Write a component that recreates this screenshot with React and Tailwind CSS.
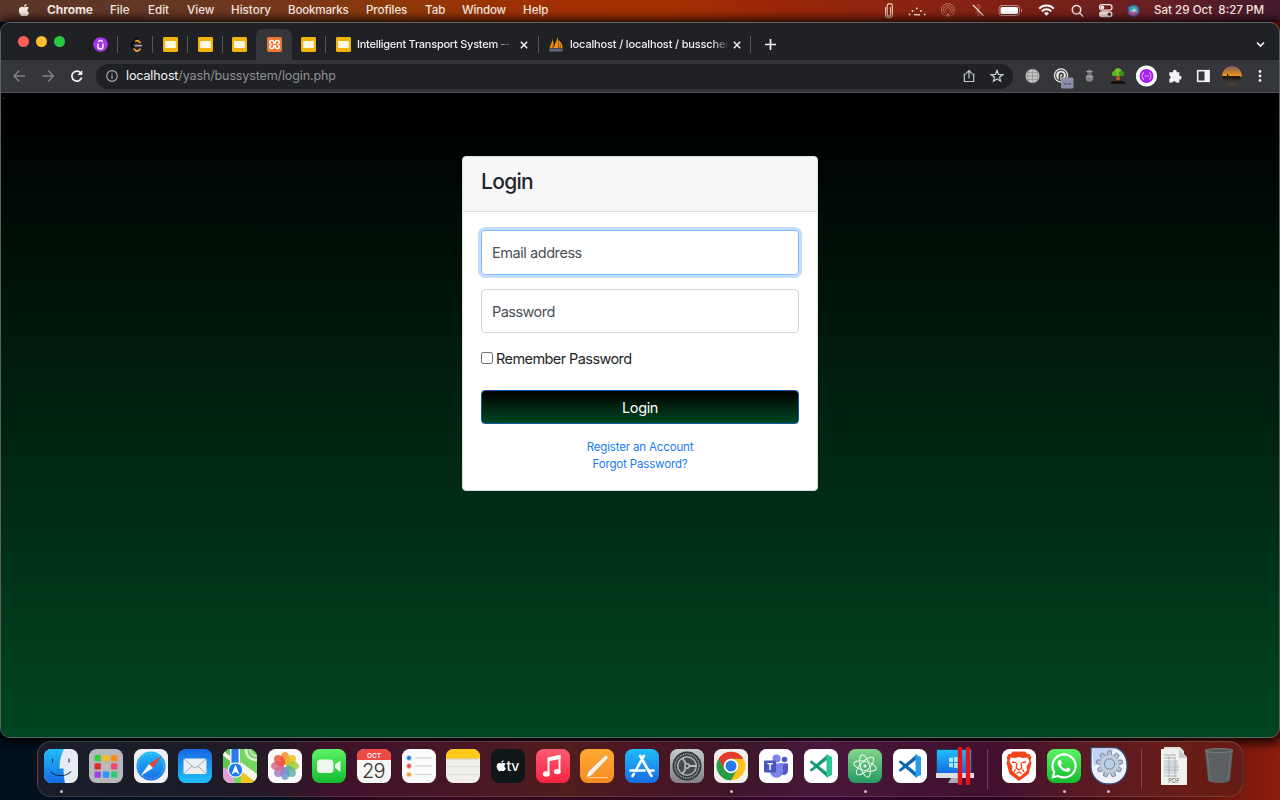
import React from "react";
import { FaApple, FaWhatsapp } from "react-icons/fa";

/* ---------- menu bar ---------- */
function MenuBar() {
  return (
    <header className="flex h-[22px] shrink-0 items-center bg-[linear-gradient(90deg,#5a3729_0%,#633725_12%,#77371a_22%,#8f3809_31%,#a03002_42%,#a33001_52%,#982608_61%,#8e2410_70%,#7d2117_80%,#672026_90%,#431a2c_100%)] pb-[2px] text-[11.6px] font-medium leading-[18px] text-[#f7e9e2]">
      <div className="w-[47px] pl-[17px]"><FaApple size={14} /></div>
      <span className="w-[63px] text-[12px] font-bold tracking-[-.1px]">Chrome</span>
      <span className="w-[38px]">File</span>
      <span className="w-[39px]">Edit</span>
      <span className="w-[44px]">View</span>
      <span className="w-[57px]">History</span>
      <span className="w-[78px] tracking-[-.2px]">Bookmarks</span>
      <span className="w-[59px] tracking-[-.1px]">Profiles</span>
      <span className="w-[37px]">Tab</span>
      <span className="w-[61px] tracking-[-.2px]">Window</span>
      <span className="w-[352px]">Help</span>
      <svg className="w-[28px]" height="20" viewBox="0 0 28 20" fill="none" stroke="#e9c8ba" strokeWidth="1.1">
        <path d="M10.6 7v7.5a3.4 3.2 0 0 0 6.8 0V6.2a2.6 2.6 0 0 0-5.2 0v8.2a1.7 1.7 0 0 0 3.4 0V7" />
      </svg>
      <svg className="w-[31px]" height="20" viewBox="0 0 31 20" fill="#f7e9e2">
        <circle cx="6.5" cy="14.5" r="1" /><circle cx="9.5" cy="11" r=".9" /><circle cx="13.8" cy="8.4" r=".9" /><circle cx="18" cy="11" r=".9" /><circle cx="21.6" cy="14.5" r="1" /><rect x="11" y="14" width="6" height="1.5" />
      </svg>
      <svg className="w-[31px]" height="20" viewBox="0 0 31 20" fill="none" stroke="#bb6d5a" strokeWidth="1">
        <path d="M10.600 15.700a6.500 6.500 0 1 1 6.600 0M11.400 13.600a4.400 4.400 0 1 1 5 0M12.400 11.900a2.400 2.400 0 1 1 3 0" /><path d="m12 16 1.900-3 1.900 3z" fill="#bb6d5a" />
      </svg>
      <svg className="w-[30px]" height="20" viewBox="0 0 30 20" fill="none" strokeWidth="1">
        <path d="m10 7 6 6.5-3 3V4l3 3-6 6.5" stroke="#ad6457" /><path d="m8 5 10.400 10.600" stroke="#edd8d2" strokeWidth="1.300" />
      </svg>
      <svg className="w-[34px]" height="20" viewBox="0 0 34 20">
        <rect x="4" y="5.500" width="20.500" height="10" rx="3" fill="none" stroke="#c58a7e" /><rect x="5.500" y="7" width="17.500" height="7" rx="1.600" fill="#fff" /><path d="M26 8.700v3.600c1.700-.700 1.700-2.900 0-3.600" fill="#c58a7e" />
      </svg>
      <svg className="w-[36px]" height="20" viewBox="0 0 36 20" fill="none" stroke="#fff" strokeWidth="1.900">
        <path d="M10.200 8.700a10 10 0 0 1 14.600 0M12.800 11.300a6.300 6.300 0 0 1 9.400 0" /><path d="M17.500 16 15 13.200a3.600 3.600 0 0 1 5 0z" fill="#fff" stroke="none" />
      </svg>
      <svg className="w-[28px]" height="20" viewBox="0 0 28 20" fill="none" stroke="#f8e8e6" strokeWidth="1.500">
        <circle cx="11.500" cy="9.800" r="4.200" /><path d="m14.700 13 3.100 3.200" strokeLinecap="round" />
      </svg>
      <svg className="w-[27px]" height="20" viewBox="0 0 27 20">
        <rect x="6.500" y="4.700" width="12.500" height="5.400" rx="2.700" fill="none" stroke="#f5e7e7" strokeWidth="1.200" /><circle cx="9.300" cy="7.400" r="1.900" fill="#f5e7e7" /><rect x="6" y="11.300" width="13.500" height="6" rx="3" fill="#f5e7e7" /><circle cx="16.300" cy="14.300" r="1.700" fill="#6e2026" />
      </svg>
      <svg className="w-[34px]" height="20" viewBox="0 0 34 20">
        <defs><radialGradient id="siri"><stop offset="0" stopColor="#fff" /><stop offset=".35" stopColor="#7ec2dd" /><stop offset=".75" stopColor="#4563a6" /><stop offset="1" stopColor="#463058" /></radialGradient></defs>
        <circle cx="13.600" cy="10.800" r="6.500" fill="url(#siri)" /><path d="M8 8c5-5 9-2 11 1-4-1-6 0-6 2-3 0-4-2-5-3" fill="#2ba8a5" opacity=".6" /><path d="M8 13.300c3-2 6-3 10-1-2 4-7 5-10 1" fill="#d13c84" opacity=".65" />
      </svg>
      <span className="whitespace-pre">Sat 29 Oct  8:27 PM</span>
    </header>
  );
}

/* ---------- browser tabs ---------- */
function Slides() {
  return (
    <svg width="15" height="15" viewBox="0 0 15 15" className="shrink-0">
      <rect width="15" height="15" rx="1.4" fill="#f1b408" /><rect x="2.2" y="4" width="10.6" height="7" fill="#fff8e5" />
    </svg>
  );
}
const Sep = () => <i className="h-[17px] w-px shrink-0 bg-[#55575b]" />;
const Cross = () => (
  <svg width="8" height="8" viewBox="0 0 8 8" stroke="#f1f3f4" strokeWidth="1.5" className="shrink-0"><path d="m.8.8 6.4 6.4m0-6.4L.8 7.2" /></svg>
);

function Tabs() {
  return (
    <div className="flex h-[37px] items-center bg-[#202124] pt-[6px] text-[11px] font-medium text-[#eceef0]">
      <div className="flex w-[82px] gap-[7px] pb-[6px] pl-[17px]">
        <i className="size-[11px] rounded-full bg-[#ff5f57]" />
        <i className="size-[11px] rounded-full bg-[#febc2e]" />
        <i className="size-[11px] rounded-full bg-[#28c840]" />
      </div>
      <div className="flex w-[34px] justify-center">
        <svg width="15" height="15" viewBox="0 0 15 15"><circle cx="7.5" cy="7.5" r="7.3" fill="#a435e8" /><path d="M5 6.5v3a2.400 2.400 0 0 0 5 0v-3M5.200 4.600l2.300-1.400 2.300 1.400" fill="none" stroke="#fff" strokeWidth="1.400" /></svg>
      </div>
      <Sep />
      <div className="flex w-[34px] justify-center pl-[2px]">
        <svg width="15" height="15" viewBox="0 0 15 15" fill="none" strokeWidth="1.700" strokeLinecap="round"><path d="M8.400 1.200 3 6.500a2.300 2.300 0 0 0 0 3.200l1.400 1.400" stroke="#070707" /><path d="m5 12 1.500 1.400a2.400 2.400 0 0 0 3.200 0l1.300-1.200M6.800 4.200a2.200 2.200 0 0 1 2.900.100l1.300 1.200" stroke="#f3a32a" /><path d="M6.200 8.600h6.200" stroke="#aaa" /></svg>
      </div>
      <Sep />
      <div className="flex w-[34px] justify-center"><Slides /></div>
      <Sep />
      <div className="flex w-[34px] justify-center"><Slides /></div>
      <Sep />
      <div className="flex w-[33px] justify-center"><Slides /></div>
      <div className="flex h-[31px] w-[36px] items-center justify-center rounded-t-[7px] bg-[#35363a]">
        <svg width="15" height="15" viewBox="0 0 15 15"><rect width="15" height="15" rx="2" fill="#ef7631" /><path d="M5 3.500h-.800a1.700 1.700 0 0 0-1 3L4.500 7.500l-1.300 1a1.700 1.700 0 0 0 1 3H5a1.700 1.700 0 0 0 1.700-1.700V9h1.600v.800A1.700 1.700 0 0 0 10 11.500h.800a1.700 1.700 0 0 0 1-3l-1.300-1 1.300-1a1.700 1.700 0 0 0-1-3H10a1.700 1.700 0 0 0-1.700 1.700V6H6.700v-.800A1.700 1.700 0 0 0 5 3.500z" fill="none" stroke="#fff" strokeWidth="1.400" /></svg>
      </div>
      <div className="flex w-[33px] justify-center"><Slides /></div>
      <Sep />
      <div className="flex w-[212px] items-center pl-[10px]">
        <Slides />
        <span className="ml-[6px] w-[157px] whitespace-nowrap tracking-[-.25px] [mask-image:linear-gradient(90deg,#000_88%,transparent_100%)]">Intelligent Transport System --</span>
        <span className="ml-[6px] flex"><Cross /></span>
      </div>
      <Sep />
      <div className="flex w-[211px] items-center pl-[9px]">
        <svg width="16" height="15" viewBox="0 0 16 15" className="shrink-0"><path d="M5 2v9H1.500zM10 0v11H5.500zM10.500 3c3 2 4 5 4 8h-4z" fill="#f29111" /><path d="M6 4v7H3.500M13 6v5h-2" fill="#a35d1c" /><path d="M1 11.500h14l-1 3H1.500z" fill="#74778f" /><path d="M2 13h12" stroke="#34354b" strokeDasharray="1.500 1" /></svg>
        <span className="ml-[6px] w-[157px] whitespace-nowrap tracking-[-.16px] [mask-image:linear-gradient(90deg,#000_90%,transparent_102%)]">localhost / localhost / bussched</span>
        <span className="ml-[6px] flex"><Cross /></span>
      </div>
      <Sep />
      <svg className="ml-[14px]" width="11" height="11" viewBox="0 0 11 11" stroke="#f1f3f4" strokeWidth="1.700"><path d="M5.500 0v11M0 5.500h11" /></svg>
      <svg className="ml-auto mr-[14px]" width="9" height="7" viewBox="0 0 9 7" fill="none" stroke="#f1f3f4" strokeWidth="1.600"><path d="m1 1.500 3.500 3.500L8 1.500" /></svg>
    </div>
  );
}

/* ---------- toolbar ---------- */
function Toolbar() {
  return (
    <div className="flex h-[33px] items-center border-b border-[#505154] bg-[#35363a]">
      <svg className="w-[36px]" height="16" viewBox="0 0 36 16" fill="none" stroke="#808387" strokeWidth="1.400"><path d="M24 8H13m5.200-5.200L13 8l5.200 5.200" /></svg>
      <svg className="w-[23px]" height="16" viewBox="0 0 23 16" fill="none" stroke="#808387" strokeWidth="1.400"><path d="M5.500 8h11m-5.200-5.200L16.500 8l-5.200 5.200" /></svg>
      <svg className="w-[36px]" height="16" viewBox="0 0 36 16" fill="none" stroke="#f1f3f4" strokeWidth="1.700"><path d="M20.600 4.700A5 5 0 1 0 21.700 9.500" /><path d="M22.300 2v5h-5z" fill="#f1f3f4" stroke="none" /></svg>
      <div className="flex h-[25px] w-[917px] items-center rounded-full bg-[#202124] pl-[10px] pr-[9px]">
        <svg width="12" height="12" viewBox="0 0 12 12" fill="none" stroke="#a9acb1" strokeWidth="1.200"><circle cx="6" cy="6" r="5.300" /><path d="M6 5.300v3.600M6 3v1.300" /></svg>
        <span className="ml-[8px] whitespace-nowrap text-[12.500px] tracking-[-.12px] text-[#8e9196]"><span className="text-[#f1f3f4]">localhost</span>/yash/bussystem/login.php</span>
        <svg className="ml-auto" width="14" height="14" viewBox="0 0 14 14" fill="none" stroke="#c4c7cb" strokeWidth="1.200"><path d="M4.500 5H2.300v7.500h9.400V5H9.500M7 9.500V1.500M4.500 4 7 1.500 9.500 4" /></svg>
        <svg className="ml-[14px]" width="14" height="14" viewBox="0 0 14 14" fill="none" stroke="#c9ccd0" strokeWidth="1.300"><path d="m7 1.500 1.500 3.800 4.200.300-3.200 2.600 1 4L7 10l-3.500 2.200 1-4-3.200-2.600 4.200-.300z" /></svg>
      </div>
      <svg className="ml-[5px] w-[28px]" height="28" viewBox="0 0 28 28"><circle cx="14.500" cy="14" r="7" fill="#c3c3c3" /><path d="M7.500 14h14m-7-7v14M8.500 10.500h12m-12 7h12M11 8c-2 4-2 8 0 12m7-12c2 4 2 8 0 12" fill="none" stroke="#929292" strokeWidth=".8" /></svg>
      <svg className="w-[29px]" height="28" viewBox="0 0 29 28"><circle cx="15" cy="13.500" r="7.200" fill="#e8e8e8" /><circle cx="15" cy="13.500" r="5.400" fill="none" stroke="#3e3e3e" strokeWidth="1.100" /><path d="M13.500 18v-4.500m0 0a1.800 1.800 0 1 1 1.800 1.500" fill="none" stroke="#333" strokeWidth="1.600" /><rect x="15" y="15.500" width="12.500" height="11" rx="1.500" fill="#8c8da6" /><path d="M17.500 21.800h3m1.500 0h3" stroke="#50516b" strokeWidth="1.300" /></svg>
      <svg className="w-[29px]" height="28" viewBox="0 0 29 28"><circle cx="14.500" cy="10" r="2.500" fill="#707275" /><path d="M11.500 9.500h6" stroke="#a2a2a2" /><circle cx="14.500" cy="16" r="3.800" fill="#85878a" /><path d="M11 14.500h7" stroke="#a0a1a2" /></svg>
      <svg className="w-[28px]" height="28" viewBox="0 0 28 28"><path d="M12.500 13h3l.500 7h-4z" fill="#ad6122" /><path d="M7 20c4-2 10-2 14 0v2H7z" fill="#17120c" /><circle cx="14" cy="10" r="3.700" fill="#72c82b" /><circle cx="10.500" cy="11.500" r="2.600" fill="#5db321" /><circle cx="17.500" cy="11.500" r="2.600" fill="#3d8f16" /></svg>
      <svg className="w-[29px]" height="28" viewBox="0 0 29 28"><circle cx="14.500" cy="14" r="10.600" fill="#fff" /><circle cx="14.500" cy="14" r="7" fill="#a920eb" /><path d="M12 10.500c-2 0-1 3-2.500 3.500 1.500.500.500 3.500 2.500 3.500m5-7c2 0 1 3 2.500 3.500-1.500.500-.500 3.500-2.500 3.500M12.500 14h4" fill="none" stroke="#e6b6fb" /></svg>
      <svg className="w-[28px]" height="28" viewBox="0 0 28 28" fill="#f1f3f4"><path d="M8.300 10.300H12a1.900 1.900 0 1 1 3.600 0h2.700v3.500a1.900 1.900 0 1 1 0 3.700v3H15a1.900 1.900 0 0 0-3.600 0H8.300V17a1.900 1.900 0 0 0 0-3.600z" /></svg>
      <svg className="w-[28px]" height="28" viewBox="0 0 28 28"><rect x="8.700" y="8.700" width="11.300" height="10.600" fill="none" stroke="#f1f3f4" strokeWidth="1.600" /><path d="M15.500 8h5v12h-5z" fill="#f1f3f4" /></svg>
      <svg className="w-[29px]" height="28" viewBox="0 0 29 28"><defs><linearGradient id="sunset" x2="0" y2="1"><stop offset="0" stopColor="#79616a" /><stop offset=".25" stopColor="#b9773b" /><stop offset=".5" stopColor="#ec991c" /><stop offset=".56" stopColor="#29221e" /><stop offset="1" stopColor="#4e4541" /></linearGradient></defs><circle cx="15" cy="14" r="10" fill="url(#sunset)" /><path d="M5 14h5v-3l2 3h11v3H7z" fill="#241e1a" /></svg>
      <svg className="w-[28px]" height="28" viewBox="0 0 28 28" fill="#f1f3f4"><circle cx="14" cy="9.500" r="1.400" /><circle cx="14" cy="14" r="1.400" /><circle cx="14" cy="18.500" r="1.400" /></svg>
    </div>
  );
}

/* ---------- page ---------- */
function LoginPage() {
  return (
    <main className="flex flex-1 flex-col items-center bg-[linear-gradient(#000_3%,#004620)]">
      <span className="h-[63px] self-start pl-px text-[9px] leading-[5px] text-[#555]">.</span>
      <form className="h-[335px] w-[356px] overflow-hidden rounded-[4px] border border-[#dcdfdd] bg-white text-[14.500px] tracking-[-.54px] text-[#212529]">
        <h3 className="h-[55px] border-b border-[#dfdfdf] bg-[#f7f7f7] pl-[18px] pt-[12px] text-[21px] font-medium leading-[25px] tracking-[-.7px]">Login</h3>
        <div className="flex flex-col px-[18px] pt-[18px]">
          <div className="flex h-[45px] items-center rounded-[4px] border border-[#80bdff] pl-[10px] tracking-[-.44px] text-[#495057] shadow-[0_0_0_3px_#c4ddfe]">Email address</div>
          <div className="mt-[14px] flex h-[44px] items-center rounded-[4px] border border-[#ced4da] pl-[10px] pt-px text-[#495057]">Password</div>
          <div className="mt-[14px] flex h-[22px] items-center gap-[3px]"><i className="size-[12px] rounded-[2px] border border-[#767676]" /><span className="pt-[2px] tracking-[-.58px]">Remember Password</span></div>
          <div className="mt-[21px] flex h-[34px] items-center justify-center rounded-[4px] border border-[#075ba8] bg-[linear-gradient(#000,#004620)] pt-px tracking-[-.4px] text-white">Login</div>
          <div className="mt-[15px] flex flex-col items-center text-[11.500px] leading-[17px] tracking-[-.15px] text-[#187bf0]"><span>Register an Account</span><span>Forgot Password?</span></div>
        </div>
      </form>
    </main>
  );
}

/* ---------- dock ---------- */
function AppIcon({ children, dot, plain, bg = "#fff" }) {
  return (
    <div className="flex h-full w-[44.680px] shrink-0 flex-col items-center pt-[5px]">
      <svg width="42" height="38" viewBox="-4 -2 42 38" className="shrink-0">
        {!plain && <rect width="34" height="34" rx="7.500" fill={bg} />}
        {children}
      </svg>
      {dot && <i className="mt-[5px] size-[3px] shrink-0 rounded-full bg-[#cdbfc6]" />}
    </div>
  );
}
const tiles = ["#39ce40", "#fcba21", "#fa8b17", "#db2d28", "#bdbdbd", "#f64771", "#9a43e0", "#2697f5", "#31c979"];
const petals = ["#f38b27", "#e9bd20", "#a6c83b", "#5fb59a", "#6b96d7", "#a47dc0", "#d26b8b", "#ed5140"];
function VsMark({ dark, light }) {
  return (
    <g><path d="m5.500 13 2-1.700L24 24v5z" fill={dark} /><path d="m5.500 21 2 1.700L24 10V5z" fill={dark} /><path d="m22.500 5.500 5.500 2.600v17.800l-5.500 2.600z" fill={light} /></g>
  );
}
function Gear() {
  return (
    <g>
      {[0, 40, 80, 120, 160, 200, 240, 280, 320].map((a) => <path key={a} d="M15 6.500 15.800 2h3.400l.800 4.500z" fill="#b3c1d2" stroke="#687c97" strokeWidth=".8" transform={`rotate(${a} 17.500 15)`} />)}
      <circle cx="17.500" cy="15" r="7.300" fill="#bdd3ea" stroke="#c3cedb" strokeWidth="4" /><circle cx="17.500" cy="15" r="5.200" fill="#b9d0ea" stroke="#687c97" strokeWidth=".9" />
    </g>
  );
}
function Dock() {
  return (
    <footer className="mx-[37px] mt-[3px] flex h-[56px] shrink-0 rounded-[14px] border border-[#ffffff24] bg-[linear-gradient(90deg,#181e29_0%,#1b1c28_13%,#2a1827_20%,#40122a_25%,#461527_33%,#511d1e_44%,#491623_50%,#3d1629_58%,#48173a_65%,#431334_73%,#43112e_80%,#5a1a22_87%,#681d17_95%,#651c14_100%)] pl-[1px]">
      <svg width="0" height="0" className="absolute"><defs>
        <linearGradient id="blue" x2="0" y2="1"><stop stopColor="#20bdf9" /><stop offset="1" stopColor="#166be6" /></linearGradient>
        <linearGradient id="mail" x2="0" y2="1"><stop stopColor="#1768e3" /><stop offset="1" stopColor="#23c0f7" /></linearGradient>
        <linearGradient id="green" x2="0" y2="1"><stop stopColor="#5df267" /><stop offset="1" stopColor="#12bc2d" /></linearGradient>
        <linearGradient id="pink" x2="0" y2="1"><stop stopColor="#fb5b74" /><stop offset="1" stopColor="#fa2440" /></linearGradient>
        <linearGradient id="orange" x2="0" y2="1"><stop stopColor="#ffac32" /><stop offset="1" stopColor="#f58a1f" /></linearGradient>
        <linearGradient id="grey" x2="0" y2="1"><stop stopColor="#c6c9cc" /><stop offset="1" stopColor="#818285" /></linearGradient>
        <linearGradient id="atom" x2="0" y2="1"><stop stopColor="#84d58a" /><stop offset="1" stopColor="#249a62" /></linearGradient>
        <clipPath id="tile"><rect width="34" height="34" rx="7.500" /></clipPath>
      </defs></svg>

      <AppIcon bg="#e7ebf2" dot><g clipPath="url(#tile)"><path d="M0 0h20c-3 6-4.500 12-4.500 19.500h4c0 5 .500 10 1.500 14.500H0z" fill="url(#blue)" /></g><path d="M8.500 10v3M25 10v3" stroke="#1a3550" strokeWidth="1.200" strokeLinecap="round" /><path d="M6.500 22.500c5 5.500 15.500 5.500 20.500 0" fill="none" stroke="#172c42" strokeWidth="1.100" /></AppIcon>
      <AppIcon bg="#b6b7ba">{tiles.map((c, i) => <rect key={c} x={5.5 + (i % 3) * 8.3} y={6 + Math.floor(i / 3) * 8.2} width="6.300" height="6.300" rx="1.300" fill={c} />)}</AppIcon>
      <AppIcon bg="#f1f1f1"><circle cx="17" cy="17" r="14.500" fill="url(#blue)" /><circle cx="17" cy="17" r="12.600" fill="none" stroke="#a8dcfa" strokeWidth="1" strokeDasharray=".6 1.100" /><path d="M27.500 7 15 15l4 4z" fill="#ed4238" /><path d="M6.500 27 15 15l4 4z" fill="#f3f1ed" /></AppIcon>
      <AppIcon bg="url(#mail)"><rect x="5.500" y="9.500" width="23" height="15.500" rx="1.500" fill="#edf0f2" /><path d="m6 10 9.500 8.300q1.500 1 3 0L28 10M6 24.500l8-7.300m14 7.300-8-7.300" fill="none" stroke="#8b98a4" strokeWidth=".8" /></AppIcon>
      <AppIcon bg="#73d85e"><g clipPath="url(#tile)"><path d="M0 0h8v34H0z" fill="#62c654" /><path d="M0 19c7 0 11 5 11 15H0z" fill="#e3a0dc" /><path d="M18 34V22l16 12z" fill="#f4c51f" /><path d="M0 4 13 14" stroke="#f5f5ed" strokeWidth="4" /><path d="M16 16 36 31" stroke="#f5f5ed" strokeWidth="7" /><path d="M7 0h10v23H7z" fill="#eee" /><path d="M8.500 0h7v22h-7z" fill="#2879e9" /><path d="M23 0c0 7 4 11 11 11" stroke="#e6efdf" strokeWidth="2.500" fill="none" /><path d="M27 0c0 4 3 7 7 7" stroke="#c9dfc2" strokeWidth="2" fill="none" /></g><circle cx="12.500" cy="21" r="7.200" fill="#1979ed" stroke="#eff5f8" strokeWidth="1.200" /><path d="m12.500 15.500 4 10-4-2.500-4 2.500z" fill="#fff" /></AppIcon>
      <AppIcon bg="#fbfbfb">{petals.map((c, i) => <ellipse key={c} cx="17" cy="9.500" rx="4.700" ry="6.500" fill={c} opacity=".85" transform={`rotate(${i * 45} 17 17)`} />)}</AppIcon>
      <AppIcon bg="url(#green)"><rect x="5" y="10.500" width="16.500" height="13.500" rx="3.500" fill="#ecf7ec" /><path d="m23 15.500 5.500-4v11.500L23 19z" fill="#e4f5e4" /></AppIcon>
      <AppIcon bg="#f7f7f5"><path d="M0 11V7.500A7.500 7.500 0 0 1 7.500 0h19A7.500 7.500 0 0 1 34 7.500V11z" fill="#ee4a43" /><text x="17" y="8.700" textAnchor="middle" fontSize="6.400" fontWeight="600" fill="#fff">OCT</text><text x="16.500" y="29" textAnchor="middle" fontSize="20" fontWeight="300" letterSpacing="-.6" fill="#333">29</text></AppIcon>
      <AppIcon bg="#fafafa"><path d="M13 9h17M13 17h17M13 25.500h17" stroke="#c7c7c9" strokeWidth=".9" /><circle cx="7" cy="9" r="2.400" fill="#1677ed" stroke="#b6d3f7" /><circle cx="7" cy="17" r="2.400" fill="#e34b3e" stroke="#f1c4bf" /><circle cx="7" cy="25.500" r="2.400" fill="#ef9b3a" stroke="#f4dbbc" /></AppIcon>
      <AppIcon bg="#f0efea"><path d="M0 9.500v-2A7.500 7.500 0 0 1 7.500 0h19A7.500 7.500 0 0 1 34 7.500v2z" fill="#fdca1a" /><path d="M1 10h32" stroke="#a79974" strokeWidth=".7" strokeDasharray="1 .7" /><path d="M0 17.500h34M0 25.500h34" stroke="#d3d2cd" strokeWidth=".6" /></AppIcon>
      <AppIcon bg="#101719"><FaApple x="4" y="10.500" size={12.5} color="#fff" /><text x="15.500" y="22" fontSize="14" fontWeight="500" fill="#f7f7f7" letterSpacing="-.3">tv</text></AppIcon>
      <AppIcon bg="url(#pink)"><path d="M12.500 24V9.500l11-2.400v14.500" fill="none" stroke="#fff" strokeWidth="1.900" /><path d="m12 8.500 12.500-2.700v4L12 12.500z" fill="#fff" /><ellipse cx="10.300" cy="25" rx="3.500" ry="2.700" fill="#fff" /><ellipse cx="21.300" cy="22.600" rx="3.500" ry="2.700" fill="#fff" /></AppIcon>
      <AppIcon bg="url(#orange)"><path d="m6.500 28 2.200-6L25 6.500c1.500-1 4 1.200 3 2.800L12.500 25.500z" fill="#f7f1e8" stroke="#cf7628" strokeWidth=".5" /><path d="m6.500 28 2-5 3.500 3z" fill="#fff" /><path d="M8 28.500h20" stroke="#ffd09a" strokeWidth=".9" /></AppIcon>
      <AppIcon bg="url(#blue)"><path d="m15.200 7 9.300 16.500M18.800 7l-8.300 14.800M5.500 21.500h14m5 0h4M8.800 25l-1.200 2m17.500-2.300 1.300 2.200" stroke="#fff" strokeWidth="2.700" strokeLinecap="round" /></AppIcon>
      <AppIcon bg="url(#grey)"><circle cx="17" cy="17" r="14.500" fill="#36393c" /><circle cx="17" cy="17" r="12" fill="none" stroke="#989da1" strokeWidth="1.600" strokeDasharray="1.100 .7" /><circle cx="17" cy="17" r="9.300" fill="#484b4e" stroke="#b1b5b8" strokeWidth="1.500" /><path d="M17 17h9m-9 0-4.500-8M17 17l-4.500 8" stroke="#b8bbbe" strokeWidth="1.800" /><circle cx="17" cy="17" r="2.200" fill="#474a4d" stroke="#b8bbbe" strokeWidth="1.500" /></AppIcon>
      <AppIcon bg="#f2f0ef" dot><circle cx="17" cy="17" r="14.300" fill="#fbc116" /><path d="M4.600 9.850A14.300 14.300 0 0 1 29.400 9.850H17A7.150 7.150 0 0 0 10.800 20.600z" fill="#e33b2e" /><path d="M4.600 9.850A14.300 14.300 0 0 0 17 31.300L23.200 20.600A7.150 7.150 0 0 1 10.800 20.600z" fill="#269c46" /><circle cx="17" cy="17" r="7.200" fill="#fff" /><circle cx="17" cy="17" r="5.500" fill="#2878e8" /></AppIcon>
      <AppIcon><circle cx="17.500" cy="9.500" r="4" fill="#7b83eb" /><circle cx="25.500" cy="10.500" r="2.800" fill="#5059c9" /><path d="M20 14.500h9v7c0 5-6 6-9 2z" fill="#5059c9" /><path d="M11 14.500h13V22c0 9-13 9-13 0z" fill="#7b83eb" /><rect x="5" y="11.500" width="12" height="12" rx="1.200" fill="#4b53bc" /><text x="11" y="20.800" textAnchor="middle" fontSize="9" fontWeight="700" fill="#fff">T</text></AppIcon>
      <AppIcon><VsMark dark="#1a9879" light="#2bc59a" /></AppIcon>
      <AppIcon bg="url(#atom)" dot><g fill="none" stroke="#e8f8e9" strokeWidth="1"><ellipse cx="17" cy="17" rx="11.500" ry="4.500" transform="rotate(14 17 17)" /><ellipse cx="17" cy="17" rx="11.500" ry="4.500" transform="rotate(74 17 17)" /><ellipse cx="17" cy="17" rx="11.500" ry="4.500" transform="rotate(134 17 17)" /></g><circle cx="17" cy="17" r="1.600" fill="#fff" /></AppIcon>
      <AppIcon><VsMark dark="#0769b2" light="#279ce8" /></AppIcon>
      <AppIcon plain><path d="M-2 0h36v24H-2z" fill="#263a4a" /><path d="M-1 1h34v23H-1z" fill="url(#blue)" /><path d="m11 9 4-.500v4.500h-4zm5-.700 6-.700V13h-6zM11 14h4v4.500l-4-.500zm5 0h6v5.500l-6-.800z" fill="#adeaff" /><path d="M-2 24h38v5H-2z" fill="#dddfe0" /><path d="M13 29h8l1 5H10z" fill="#a8aaae" /><path d="M22 0v34m8-34v34" stroke="#e3151c" strokeWidth="4.500" strokeLinecap="round" /></AppIcon>
      <i className="mx-[9.500px] my-auto h-[40px] w-px bg-[#ffffff35]" />
      <AppIcon><path d="M11 2.500h12l2.500 2.500h2l2 3.500-1 2.500 1 3L26.500 25 17 32l-9.500-7L4.500 14l1-3-1-2.500 2-3.500h2z" fill="#f4461d" /><path d="m8.500 8.500 4.500.500 4-1 4 1 4.500-.500 2 4-3 5 .500 4-7.500 6.500-7.500-6.500.500-4-3-5z" fill="#fff" /><path d="m10 13 4.500.700M24 13l-4.500.700M15 14l-.700 5 2.700 2 2.700-2-.700-5M12 23l1.500-3M22 23l-1.500-3M14.500 24.500 17 23l2.500 1.500" fill="none" stroke="#f4461d" strokeWidth="1.300" /></AppIcon>
      <AppIcon bg="url(#green)" dot><FaWhatsapp x="2.500" y="2.500" size={29} color="#fff" /></AppIcon>
      <AppIcon plain dot><path d="M-1-1.500h22a14 17 0 0 1 14 17v3.500a17 17 0 0 1-17 16h-3A17 17 0 0 1-1 18z" fill="#edf2fb" stroke="#304a75" strokeWidth="1.300" /><path d="M0 0h22L2 17z" fill="#acc3ec" opacity=".7" /><Gear /></AppIcon>
      <i className="mx-[9.700px] my-auto h-[40px] w-px bg-[#ffffff35]" />
      <AppIcon plain><path d="M7-2h16l4 4v9H7z" fill="#dfdfdd" /><path d="M4 0h18l8 8v28H4z" fill="#f0f0ed" /><path d="M22 0v9h8" fill="#c9cac7" /><path d="M7 6h12M7 9h11M7 18h15M7 21h15M7 27h13" stroke="#969eb0" strokeWidth=".8" /><path d="M7 11h14v14H7z" fill="#c5cbd8" opacity=".65" /><path d="M12 7v21M18 8v20" stroke="#8d9298" strokeWidth=".5" /><text x="17" y="34" textAnchor="middle" fontSize="6" fill="#666">PDF</text></AppIcon>
      <AppIcon plain><path d="m3 1 3 30c1 4 21 4 22 0l3-30z" fill="#5c6062" /><path d="m5 3 3 28M29 3l-3 28" stroke="#83898a" strokeWidth=".8" opacity=".6" /><ellipse cx="17" cy="1.500" rx="14" ry="2" fill="#54595b" stroke="#82878a" strokeWidth=".8" /></AppIcon>
    </footer>
  );
}

export default function App() {
  return (
    <div className="flex h-[800px] w-[1280px] flex-col overflow-hidden bg-[linear-gradient(90deg,#02111f_0%,#05111f_22%,#2a0619_27%,#36091d_35%,#32071e_50%,#370633_62%,#28041f_77%,#5c130f_92%,#8d1c0c_100%)] font-['Inter',sans-serif]">
      <MenuBar />
      <section className="flex h-[716px] shrink-0 flex-col overflow-hidden rounded-[10px] border border-[#5c6260] shadow-[0_1px_8px_5px_#000b]">
        <Tabs />
        <Toolbar />
        <LoginPage />
      </section>
      <Dock />
    </div>
  );
}
